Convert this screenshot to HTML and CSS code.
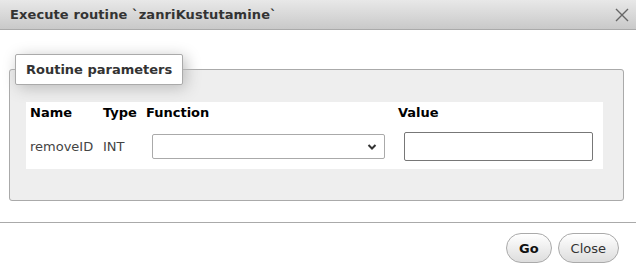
FILE: index.html
```html
<!DOCTYPE html>
<html lang="en">
<head>
    <meta charset="UTF-8">
    <title>Execute routine</title>
    <link rel="stylesheet" href="styles.css">
</head>
<body>

<div class="dialog">
    <!-- Title bar -->
    <div class="titlebar">
        <span class="title">Execute routine `zanriKustutamine`</span>
        <button class="close-x" aria-label="Close">
            <svg width="14" height="14" viewBox="0 0 14 14">
                <path d="M1 1 L13 13 M13 1 L1 13" stroke="#666" stroke-width="1.4" fill="none"/>
            </svg>
        </button>
    </div>

    <!-- Content -->
    <div class="content">
        <fieldset class="params">
            <legend>Routine parameters</legend>
            <table class="param-table">
                <colgroup>
                    <col class="c-name">
                    <col class="c-type">
                    <col class="c-func">
                    <col class="c-value">
                </colgroup>
                <tr class="head">
                    <th>Name</th>
                    <th>Type</th>
                    <th>Function</th>
                    <th>Value</th>
                </tr>
                <tr class="row">
                    <td>removeID</td>
                    <td>INT</td>
                    <td>
                        <div class="select">
                            <svg width="10" height="8" viewBox="0 0 10 8">
                                <path d="M1.5 2 L5 5.5 L8.5 2" stroke="#333" stroke-width="2" fill="none"/>
                            </svg>
                        </div>
                    </td>
                    <td><input type="text" class="value-input"></td>
                </tr>
            </table>
        </fieldset>
    </div>

    <!-- Buttons -->
    <div class="buttonbar">
        <button class="btn btn-go">Go</button>
        <button class="btn">Close</button>
    </div>
</div>

</body>
</html>
```

FILE: styles.css
```css
* {
    margin: 0;
    padding: 0;
    box-sizing: border-box;
    font-family: 'DejaVu Sans', sans-serif;
}

body {
    background: #fff;
    color: #444;
    font-size: 13px;
}

.dialog {
    width: 636px;
    height: 274px;
    background: #fff;
}

.titlebar {
    height: 30px;
    display: flex;
    align-items: center;
    justify-content: space-between;
    padding: 0 7px 0 10px;
    background: linear-gradient(to bottom, #e8e8e8, #c9c9c9);
    border-bottom: 1px solid #aaa;
}

.title {
    font-weight: bold;
    color: #333;
    font-size: 13px;
    letter-spacing: 0.1px;
}

.close-x {
    background: none;
    border: none;
    width: 14px;
    height: 14px;
    display: flex;
}

.content {
    padding: 24px 12px 21px 9px;
}

.params {
    border: 1px solid #aaa;
    border-radius: 3px;
    background: #eee;
    padding: 17px 20px 31px 16px;
    min-width: 0;
}

.params legend {
    margin-left: -11px;
    background: #fff;
    border: 1px solid #aaa;
    border-radius: 2px;
    padding: 0 10px;
    height: 31px;
    line-height: 29px;
    font-weight: bold;
    color: #333;
    box-shadow: 3px 3px 15px #bbb;
}

.param-table {
    width: 577px;
    background: #fff;
    border-collapse: collapse;
    table-layout: fixed;
}

.c-name { width: 73px; }
.c-type { width: 43px; }
.c-func { width: 252px; }
.c-value { width: 209px; }

.param-table th {
    text-align: left;
    font-weight: bold;
    color: #000;
    height: 23px;
    padding: 0 4px 3px;
    white-space: nowrap;
}

.param-table td {
    height: 44px;
    padding: 0 4px 1px;
    color: #444;
    white-space: nowrap;
}

.select {
    margin-left: 6px;
    width: 233px;
    height: 25px;
    border: 1px solid #aaa;
    border-radius: 2px;
    background: #fff;
    display: flex;
    align-items: center;
    justify-content: flex-end;
    padding-right: 7px;
}

.value-input {
    display: block;
    margin-left: 6px;
    width: 189px;
    height: 29px;
    border: 1px solid #777;
    border-radius: 2px;
    background: #fff;
}

.buttonbar {
    border-top: 1px solid #aaa;
    display: flex;
    justify-content: flex-end;
    gap: 6px;
    padding: 10px 17px 0 0;
}

.btn {
    height: 30px;
    padding: 0 12px;
    border: 1px solid #aaa;
    border-radius: 15px;
    background: linear-gradient(to bottom, #fff, #ddd);
    color: #333;
    font-size: 13px;
    cursor: pointer;
}

.btn-go {
    font-weight: bold;
    color: #111;
}
```
